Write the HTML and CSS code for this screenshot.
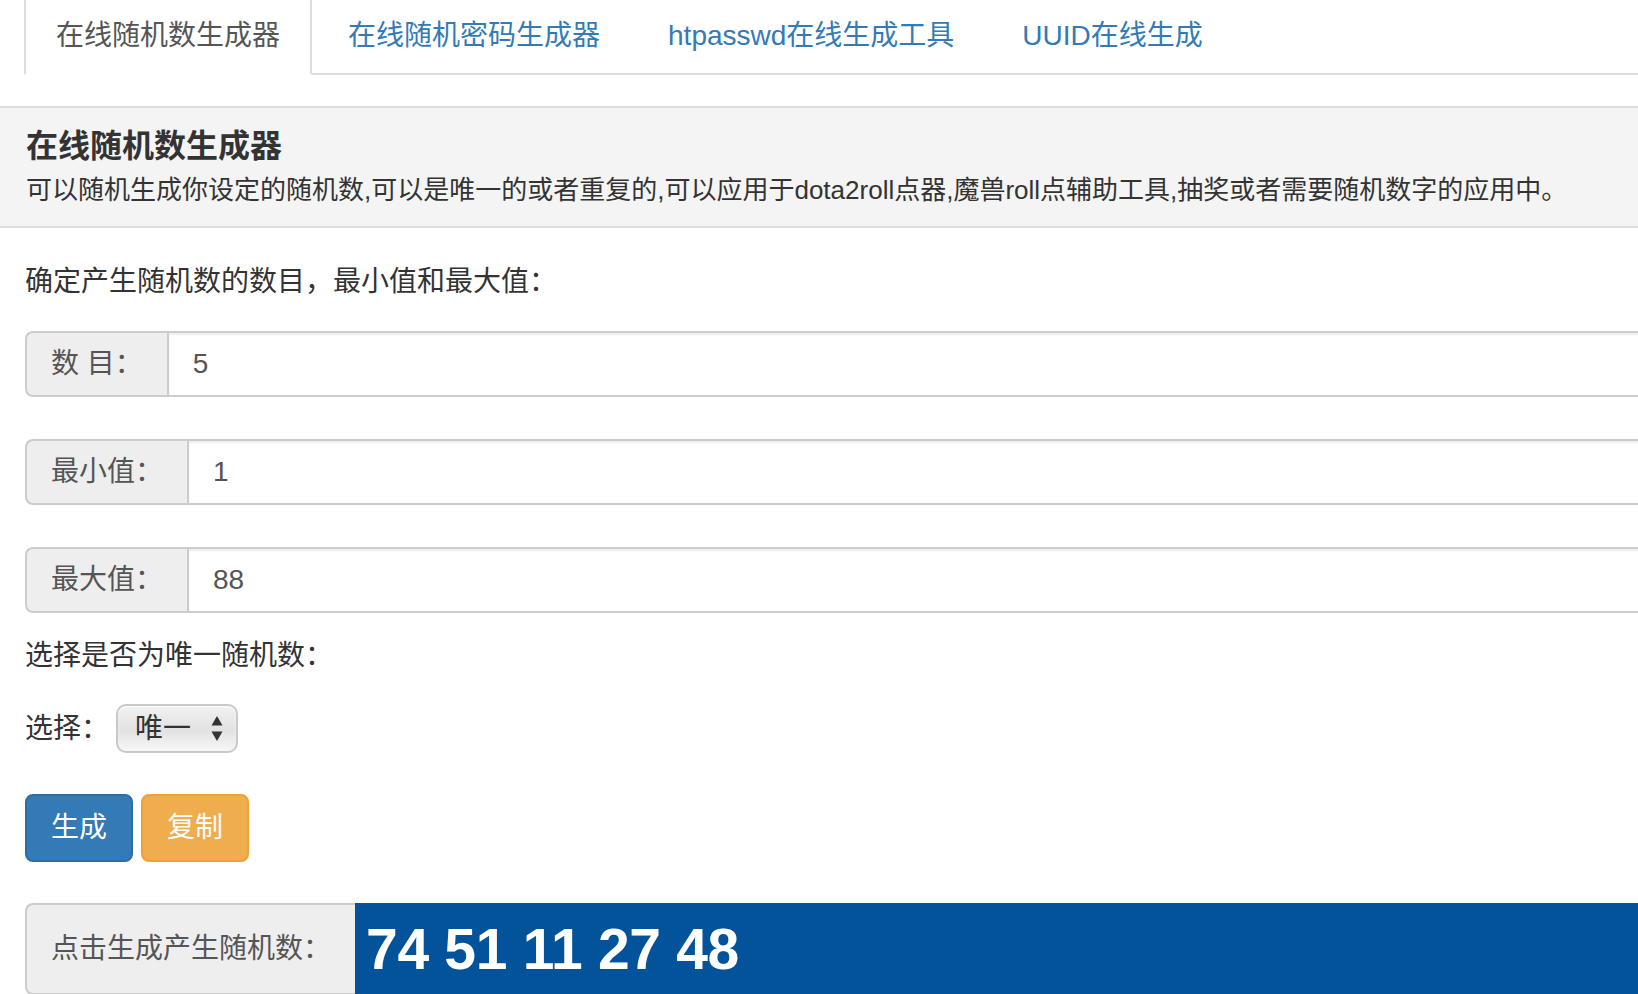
FILE: index.html
```html
<!DOCTYPE html>
<html lang="zh-CN">
<head>
    <meta charset="UTF-8">
    <meta name="viewport" content="width=device-width, initial-scale=1.0">
    <title>在线随机数生成器</title>
    <link rel="stylesheet" href="styles.css">
</head>
<body>

    <div class="page">
        <ul class="nav-tabs">
            <li class="active"><a href="#">在线随机数生成器</a></li>
            <li><a href="#">在线随机密码生成器</a></li>
            <li><a href="#">htpasswd在线生成工具</a></li>
            <li><a href="#">UUID在线生成</a></li>
        </ul>

        <div class="panel-heading">
            <h3>在线随机数生成器</h3>
            <p>可以随机生成你设定的随机数,可以是唯一的或者重复的,可以应用于dota2roll点器,魔兽roll点辅助工具,抽奖或者需要随机数字的应用中。</p>
        </div>

        <div class="panel-body">
            <p class="hint">确定产生随机数的数目，最小值和最大值：</p>

            <div class="input-group first">
                <span class="addon">数 目：</span>
                <input type="text" id="count" value="5">
            </div>

            <div class="input-group">
                <span class="addon">最小值：</span>
                <input type="text" id="min" value="1">
            </div>

            <div class="input-group">
                <span class="addon">最大值：</span>
                <input type="text" id="max" value="88">
            </div>

            <p class="hint hint-unique">选择是否为唯一随机数：</p>

            <div class="select-row">
                <label for="unique">选择：</label>
                <span class="select-wrap">
                    <select id="unique">
                        <option value="1">唯一</option>
                        <option value="0">重复</option>
                    </select>
                    <svg class="select-arrows" width="12" height="25" viewBox="0 0 12 25">
                        <path d="M6 0 L11.5 9.5 H0.5 Z" fill="#333"/>
                        <path d="M6 25 L11.5 15.5 H0.5 Z" fill="#333"/>
                    </svg>
                </span>
            </div>

            <div class="buttons">
                <button type="button" class="btn btn-primary" id="make">生成</button>
                <button type="button" class="btn btn-warning" id="copy">复制</button>
            </div>

            <div class="result">
                <span class="addon">点击生成产生随机数：</span>
                <div class="numbers" id="numbers">74 51 11 27 48</div>
            </div>
        </div>
    </div>

    <script>
    // 生成随机数
    document.getElementById('make').addEventListener('click', function() {
        var count = parseInt(document.getElementById('count').value, 10) || 1;
        var min = parseInt(document.getElementById('min').value, 10) || 0;
        var max = parseInt(document.getElementById('max').value, 10) || 0;
        var unique = document.getElementById('unique').value === '1';
        var list = [];

        if (unique && count > max - min + 1) {
            count = max - min + 1;
        }

        while (list.length < count) {
            var n = Math.floor(Math.random() * (max - min + 1)) + min;
            if (unique && list.indexOf(n) !== -1) continue;
            list.push(n);
        }

        document.getElementById('numbers').textContent = list.join(' ');
    });

    // 复制结果
    document.getElementById('copy').addEventListener('click', function() {
        var text = document.getElementById('numbers').textContent;
        if (navigator.clipboard) {
            navigator.clipboard.writeText(text);
        }
    });
    </script>
</body>
</html>
```

FILE: styles.css
```css
html, body {
    margin: 0;
    padding: 0;
    overflow: hidden;
}

body {
    font-family: "Liberation Sans", "Noto Sans CJK SC", sans-serif;
    font-size: 28px;
    line-height: 40px;
    color: #333;
    background-color: #fff;
}

/* 页面比窗口略宽，右侧被裁掉 */
.page {
    width: calc(100% + 60px);
}

/* 顶部标签页 */
.nav-tabs {
    display: flex;
    list-style: none;
    margin: -7px 0 0 24px;
    padding: 0;
    border-bottom: 2px solid #ddd;
}

.nav-tabs li {
    margin-bottom: -2px;
}

.nav-tabs a {
    display: block;
    padding: 21px 30px 17px;
    margin-right: 4px;
    line-height: 40px;
    color: #337ab7;
    text-decoration: none;
    border: 2px solid transparent;
    border-radius: 8px 8px 0 0;
}

.nav-tabs .active a {
    color: #555;
    background-color: #fff;
    border-color: #ddd #ddd transparent;
}

/* 标题栏 */
.panel-heading {
    margin-top: 31px;
    padding: 16px 26px 14px;
    background-color: #f4f4f4;
    border-top: 2px solid #ddd;
    border-bottom: 2px solid #ddd;
}

.panel-heading h3 {
    margin: 0;
    font-size: 32px;
    line-height: 44px;
    font-weight: bold;
    color: #333;
}

.panel-heading p {
    margin: 0;
    font-size: 26px;
    line-height: 44px;
    color: #333;
}

.panel-body {
    padding-left: 25px;
}

.hint {
    margin: 34px 0 0;
    line-height: 40px;
}

.hint-unique {
    margin-top: 23px;
}

/* 输入框组 */
.input-group {
    display: flex;
    height: 66px;
    margin-top: 42px;
}

.input-group.first {
    margin-top: 29px;
}

.addon {
    display: flex;
    align-items: center;
    padding: 0 24px;
    color: #555;
    background-color: #eee;
    border: 2px solid #ccc;
    border-right: 0;
    border-radius: 8px 0 0 8px;
    white-space: nowrap;
}

.input-group input {
    flex: 1;
    box-sizing: border-box;
    height: 66px;
    margin: 0;
    padding: 0 24px;
    font-family: inherit;
    font-size: 28px;
    color: #555;
    background-color: #fff;
    border: 2px solid #ccc;
    border-right: 0;
    border-radius: 0;
    box-shadow: inset 0 2px 2px rgba(0, 0, 0, 0.075);
    outline: none;
}

/* 唯一 / 重复 选择 */
.select-row {
    display: flex;
    align-items: center;
    gap: 7px;
    margin-top: 28px;
    height: 49px;
}

.select-row label {
    line-height: 40px;
}

.select-wrap {
    position: relative;
    display: inline-block;
}

.select-wrap select {
    -webkit-appearance: none;
    appearance: none;
    box-sizing: border-box;
    width: 122px;
    height: 49px;
    padding: 0 0 0 17px;
    font-family: inherit;
    font-size: 28px;
    color: #333;
    border: 2px solid #c9c9c9;
    border-radius: 10px;
    background: linear-gradient(#f1f1f1, #e2e2e2 55%, #f7f7f7);
    box-shadow: inset 0 1px 2px rgba(255, 255, 255, 0.9);
    outline: none;
}

.select-arrows {
    position: absolute;
    left: 95px;
    top: 12px;
    pointer-events: none;
}

/* 按钮 */
.buttons {
    display: flex;
    gap: 8px;
    margin-top: 41px;
}

.btn {
    box-sizing: border-box;
    height: 68px;
    padding: 12px 24px;
    font-family: inherit;
    font-size: 28px;
    line-height: 40px;
    color: #fff;
    border: 2px solid transparent;
    border-radius: 8px;
    cursor: pointer;
}

.btn-primary {
    background-color: #337ab7;
    border-color: #2e6da4;
}

.btn-warning {
    background-color: #f0ad4e;
    border-color: #eea236;
}

/* 结果 */
.result {
    display: flex;
    height: 92px;
    margin-top: 41px;
}

.numbers {
    flex: 1;
    padding-left: 11px;
    font-size: 57px;
    font-weight: bold;
    line-height: 92px;
    letter-spacing: -0.3px;
    color: #fff;
    background-color: #02539a;
    white-space: nowrap;
}
```
